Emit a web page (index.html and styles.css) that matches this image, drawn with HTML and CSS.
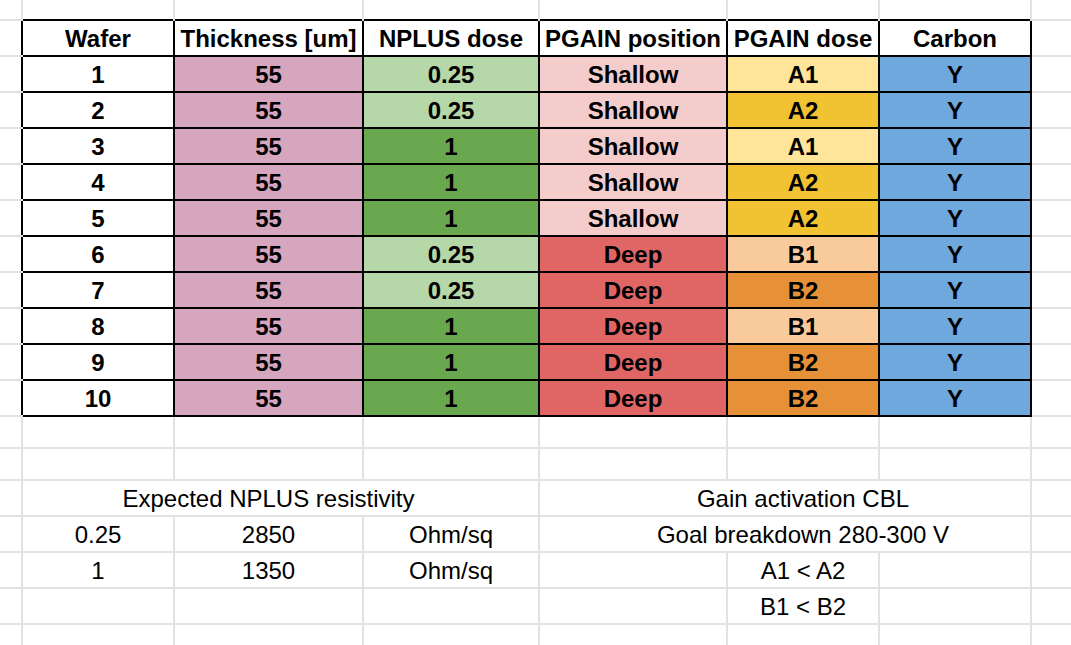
FILE: index.html
```html
<!DOCTYPE html>
<html>
<head>
<meta charset="utf-8">
<title>Wafer plan</title>
<link rel="stylesheet" href="styles.css">
</head>
<body>
<table class="sheet">
  <colgroup>
    <col class="c0"><col class="c1"><col class="c2"><col class="c3"><col class="c4"><col class="c5"><col class="c6"><col class="c7">
  </colgroup>
  <tbody>
    <tr class="r-top"><td class="edge"></td><td></td><td></td><td></td><td></td><td></td><td></td><td></td></tr>
    <tr class="r"><td class="edge"></td><td class="b">Wafer</td><td class="b">Thickness [um]</td><td class="b">NPLUS dose</td><td class="b">PGAIN position</td><td class="b">PGAIN dose</td><td class="b">Carbon</td><td></td></tr>
    <tr class="r"><td class="edge"></td><td class="b">1</td><td class="b th">55</td><td class="b n-lo">0.25</td><td class="b sh">Shallow</td><td class="b a1">A1</td><td class="b cy">Y</td><td></td></tr>
    <tr class="r"><td class="edge"></td><td class="b">2</td><td class="b th">55</td><td class="b n-lo">0.25</td><td class="b sh">Shallow</td><td class="b a2">A2</td><td class="b cy">Y</td><td></td></tr>
    <tr class="r"><td class="edge"></td><td class="b">3</td><td class="b th">55</td><td class="b n-hi">1</td><td class="b sh">Shallow</td><td class="b a1">A1</td><td class="b cy">Y</td><td></td></tr>
    <tr class="r"><td class="edge"></td><td class="b">4</td><td class="b th">55</td><td class="b n-hi">1</td><td class="b sh">Shallow</td><td class="b a2">A2</td><td class="b cy">Y</td><td></td></tr>
    <tr class="r"><td class="edge"></td><td class="b">5</td><td class="b th">55</td><td class="b n-hi">1</td><td class="b sh">Shallow</td><td class="b a2">A2</td><td class="b cy">Y</td><td></td></tr>
    <tr class="r"><td class="edge"></td><td class="b">6</td><td class="b th">55</td><td class="b n-lo">0.25</td><td class="b dp">Deep</td><td class="b b1">B1</td><td class="b cy">Y</td><td></td></tr>
    <tr class="r"><td class="edge"></td><td class="b">7</td><td class="b th">55</td><td class="b n-lo">0.25</td><td class="b dp">Deep</td><td class="b b2">B2</td><td class="b cy">Y</td><td></td></tr>
    <tr class="r"><td class="edge"></td><td class="b">8</td><td class="b th">55</td><td class="b n-hi">1</td><td class="b dp">Deep</td><td class="b b1">B1</td><td class="b cy">Y</td><td></td></tr>
    <tr class="r"><td class="edge"></td><td class="b">9</td><td class="b th">55</td><td class="b n-hi">1</td><td class="b dp">Deep</td><td class="b b2">B2</td><td class="b cy">Y</td><td></td></tr>
    <tr class="r"><td class="edge"></td><td class="b">10</td><td class="b th">55</td><td class="b n-hi">1</td><td class="b dp">Deep</td><td class="b b2">B2</td><td class="b cy">Y</td><td></td></tr>
    <tr class="r-short"><td class="edge"></td><td></td><td></td><td></td><td></td><td></td><td></td><td></td></tr>
    <tr class="r-short"><td class="edge"></td><td></td><td></td><td></td><td></td><td></td><td></td><td></td></tr>
    <tr class="r plain"><td class="edge"></td><td colspan="3" class="span-l">Expected NPLUS resistivity</td><td colspan="3" class="span-r">Gain activation CBL</td><td></td></tr>
    <tr class="r plain"><td class="edge"></td><td>0.25</td><td>2850</td><td>Ohm/sq</td><td colspan="3" class="span-r">Goal breakdown 280-300 V</td><td></td></tr>
    <tr class="r plain"><td class="edge"></td><td>1</td><td>1350</td><td>Ohm/sq</td><td></td><td>A1 &lt; A2</td><td></td><td></td></tr>
    <tr class="r plain"><td class="edge"></td><td></td><td></td><td></td><td></td><td>B1 &lt; B2</td><td></td><td></td></tr>
    <tr class="r plain"><td class="edge"></td><td></td><td></td><td></td><td></td><td></td><td></td><td></td></tr>
  </tbody>
</table>
</body>
</html>
```

FILE: styles.css
```css
html, body {
  margin: 0;
  padding: 0;
  background: #ffffff;
  overflow: hidden;
}

.sheet {
  border-collapse: collapse;
  table-layout: fixed;
  width: 1091px;
  font-family: "Liberation Sans", Arial, sans-serif;
  font-size: 24px;
  font-weight: 700;
  color: #000000;
}

.c0 { width: 22px; }
.c1 { width: 152px; }
.c2 { width: 189px; }
.c3 { width: 176px; }
.c4 { width: 188px; }
.c5 { width: 152px; }
.c6 { width: 152px; }
.c7 { width: 60px; }

.sheet td {
  border: 2px solid #e2e2e2;
  padding: 2px 0 0 0;
  text-align: center;
  vertical-align: middle;
  white-space: nowrap;
  overflow: visible;
}

.sheet td.edge {
  border-left: none;
}

.r-top td {
  border-top: none;
  padding: 0;
}

.r-top td:not(.edge) {
  border-bottom: none;
}

.r-top { height: 20px; }
.r { height: 36px; }
.r-short { height: 32px; }

.r .edge { border-right: none; }
.plain .edge,
.r-short .edge { border-right: 2px solid #e2e2e2; }

.sheet td.b {
  border: 2px solid #000000;
}

.plain td {
  font-weight: 400;
}

.sheet td.span-l { padding-right: 24px; }
.sheet td.span-r { padding-left: 36px; }

.th { background: #d5a6bd; }
.n-lo { background: #b6d7a8; }
.n-hi { background: #6aa84f; }
.sh { background: #f4cccc; }
.dp { background: #e06666; }
.a1 { background: #ffe599; }
.a2 { background: #f1c232; }
.b1 { background: #f9cb9c; }
.b2 { background: #e69138; }
.cy { background: #6fa8dc; }
```
